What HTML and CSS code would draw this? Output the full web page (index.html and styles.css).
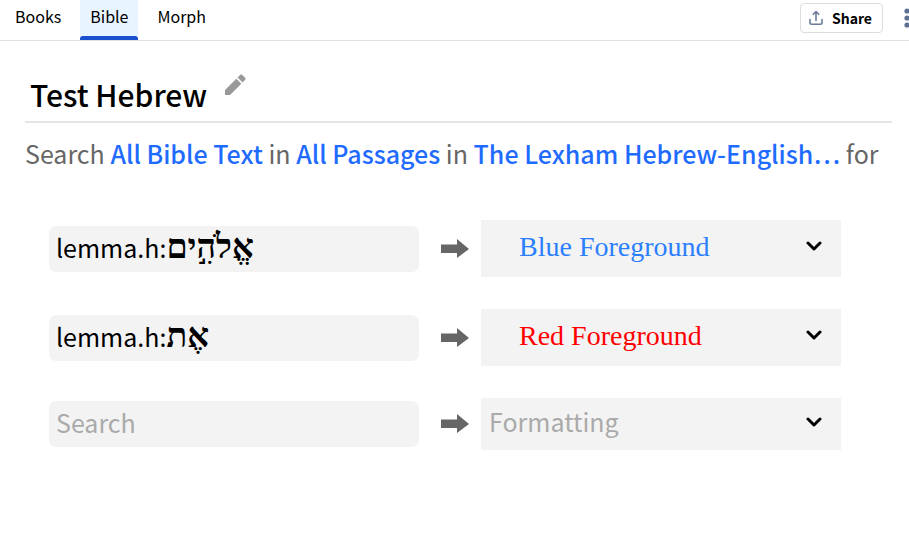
FILE: index.html
```html
<!DOCTYPE html>
<html lang="en">
<head>
  <meta charset="UTF-8">
  <title>Test Hebrew</title>
  <link rel="stylesheet" href="styles.css">
</head>
<body>
  <header class="toolbar">
    <nav class="tabs">
      <a class="tab" href="#books">Books</a>
      <a class="tab active" href="#bible">Bible</a>
      <a class="tab" href="#morph">Morph</a>
    </nav>
    <div class="actions">
      <button class="share" type="button">
        <svg width="14" height="16" viewBox="0 0 14 16" fill="none" stroke="#6b7a99" stroke-width="1.6" stroke-linecap="round" stroke-linejoin="round">
          <path d="M7 10.5V2M4.2 4.3L7 1.5L9.8 4.3M1 9.5V12.5Q1 14.2 2.7 14.2H11.3Q13 14.2 13 12.5V9.5"/>
        </svg>
        Share
      </button>
      <button class="more" type="button" aria-label="More">
        <svg width="6" height="22" viewBox="0 0 6 22" fill="#5f7092">
          <circle cx="3" cy="4" r="2.6"/><circle cx="3" cy="11" r="2.6"/><circle cx="3" cy="18" r="2.6"/>
        </svg>
      </button>
    </div>
  </header>

  <main class="content">
    <div class="title-row">
      <h1 class="title">Test Hebrew</h1>
      <button class="edit" type="button" aria-label="Edit title">
        <svg width="22" height="22" viewBox="0 0 22 22" fill="#999">
          <path d="M0 16L11.3 4.7L16.3 9.7L5 21H0ZM12.6 3.4L15.4 0.7Q16.2 0 17 0.7L20.3 4Q21 4.8 20.3 5.6L17.6 8.4Z"/>
        </svg>
      </button>
    </div>

    <p class="scope">Search <a href="#text">All Bible Text</a> in <a href="#passages">All Passages</a> in <a href="#version">The Lexham Hebrew-English…</a> for</p>

    <form class="rules">
      <div class="rule">
        <div class="query">
          <label for="lemma1">lemma.h:</label>
          <input class="hebrew" id="lemma1" type="text" value="אֱלֹהִ֣ים">
        </div>
        <svg class="arrow" width="28" height="20" viewBox="0 0 28 20" fill="#666"><path d="M0 5.5H16V0L28 10L16 19V14H0Z"/></svg>
        <div class="picker">
          <select class="format blue" aria-label="Formatting"><option>Blue Foreground</option></select>
          <svg class="chevron" width="16" height="11" viewBox="0 0 16 11"><path d="M2 2L8 8L14 2"/></svg>
        </div>
      </div>
      <div class="rule">
        <div class="query">
          <label for="lemma2">lemma.h:</label>
          <input class="hebrew" id="lemma2" type="text" value="אֶת">
        </div>
        <svg class="arrow" width="28" height="20" viewBox="0 0 28 20" fill="#666"><path d="M0 5.5H16V0L28 10L16 19V14H0Z"/></svg>
        <div class="picker">
          <select class="format red" aria-label="Formatting"><option>Red Foreground</option></select>
          <svg class="chevron" width="16" height="11" viewBox="0 0 16 11"><path d="M2 2L8 8L14 2"/></svg>
        </div>
      </div>
      <div class="rule">
        <div class="query">
          <input type="text" aria-label="Search" placeholder="Search">
        </div>
        <svg class="arrow" width="28" height="20" viewBox="0 0 28 20" fill="#666"><path d="M0 5.5H16V0L28 10L16 19V14H0Z"/></svg>
        <div class="picker">
          <select class="format empty" aria-label="Formatting"><option>Formatting</option></select>
          <svg class="chevron" width="16" height="11" viewBox="0 0 16 11"><path d="M2 2L8 8L14 2"/></svg>
        </div>
      </div>
    </form>
  </main>
</body>
</html>
```
FILE: styles.css
```css
* {
  box-sizing: border-box;
}
body {
  margin: 0;
  background: #fff;
  color: #000;
  font-family: "Noto Sans CJK SC", "Liberation Serif", sans-serif;
  overflow-x: hidden;
}
button {
  font-family: inherit;
  border: none;
  background: none;
  padding: 0;
}
svg {
  display: block;
  flex: none;
}
.toolbar {
  display: flex;
  justify-content: space-between;
  height: 41px;
  padding-left: 5px;
  border-bottom: 1px solid #e3e3e3;
}
.tabs {
  display: flex;
  gap: 9px;
}
.tab {
  padding: 0 10px;
  color: #000;
  font-size: 16px;
  line-height: 32px;
  text-decoration: none;
}
.tab.active {
  background: #e8f4ff;
}
.tab.active::after {
  content: "";
  display: block;
  height: 4px;
  margin: 4px -10px 0;
  border-radius: 3px 3px 0 0;
  background: #1a4fd0;
}
.actions {
  display: flex;
  align-items: flex-start;
  gap: 21px;
}
.share {
  display: flex;
  align-items: center;
  gap: 9px;
  height: 30px;
  margin-top: 3px;
  padding: 0 10px 1px 8px;
  border: 1px solid #ddd;
  border-radius: 4px;
  font-size: 14px;
  font-weight: bold;
}
.more {
  margin: 7px -1px 0 0;
}
.content {
  padding: 26px 17px 0 25px;
}
.title-row {
  display: flex;
  align-items: flex-start;
  gap: 18px;
  padding: 7px 5px;
  border-bottom: 2px solid #e5e5e5;
}
.title {
  margin: 0;
  font-size: 30px;
  font-weight: 500;
  line-height: 40px;
}
.scope {
  margin: 10px 0 0;
  color: #666;
  font-size: 25px;
  line-height: 40px;
  white-space: nowrap;
}
.scope a {
  color: #1f6bff;
  font-weight: 500;
  text-decoration: none;
}
.rules {
  display: grid;
  gap: 32px;
  margin-top: 47px;
  padding: 0 51px 0 24px;
}
.rule {
  display: grid;
  grid-template-columns: minmax(0, 370fr) 62px minmax(0, 360fr);
  align-items: center;
}
.query {
  display: flex;
  align-items: center;
  height: 46px;
  padding: 0 7px 4px;
  border-radius: 7px;
  background: #f3f3f3;
  font-size: 25px;
}
.query input {
  flex: 1;
  min-width: 0;
  height: 40px;
  padding: 0;
  border: none;
  background: none;
  color: #000;
  font: inherit;
}
.query .hebrew {
  height: 46px;
  font-family: "Liberation Serif", serif;
  font-size: 34px;
  font-weight: bold;
}
.query input::placeholder {
  color: #aaa;
}
.arrow {
  justify-self: end;
  margin-right: 12px;
}
.picker {
  display: grid;
  align-items: center;
}
.format {
  grid-area: 1 / 1;
  width: 100%;
  height: 57px;
  padding: 0 38px 4px;
  border: none;
  border-radius: 0;
  appearance: none;
  background: #f3f3f3;
  font-family: "Liberation Serif", serif;
  font-size: 28px;
}
.format.blue {
  color: #2b7fff;
}
.format.red {
  color: #f00;
}
.format.empty {
  height: 52px;
  padding: 0 8px 6px;
  color: #aaa;
  font-family: inherit;
  font-size: 25px;
}
.chevron {
  grid-area: 1 / 1;
  justify-self: end;
  margin: 0 19px 4px 0;
  fill: none;
  stroke: #000;
  stroke-width: 3;
  stroke-linecap: round;
  stroke-linejoin: round;
  pointer-events: none;
}
```
